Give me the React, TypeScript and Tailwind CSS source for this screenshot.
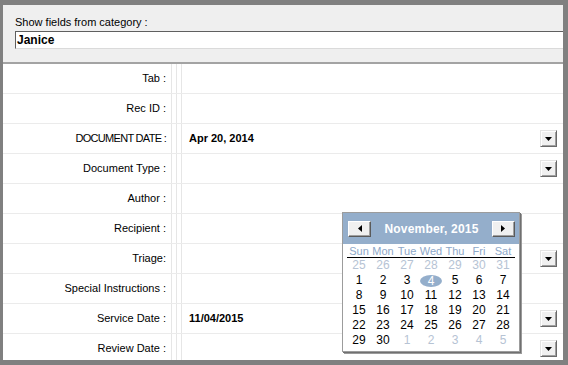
import React from "react";

const FONT = { fontFamily: '"Liberation Sans", Arial, sans-serif' };

const ROWS = [
  { label: "Tab :" },
  { label: "Rec ID :" },
  { label: "DOCUMENT DATE :", value: "Apr 20, 2014", drop: true, tight: true },
  { label: "Document Type :", drop: true },
  { label: "Author :" },
  { label: "Recipient :" },
  { label: "Triage:", drop: true },
  { label: "Special Instructions :" },
  { label: "Service Date :", value: "11/04/2015", drop: true },
  { label: "Review Date :", drop: true },
];

const DAYS = ["Sun", "Mon", "Tue", "Wed", "Thu", "Fri", "Sat"];

// [day, inMonth]
const WEEKS: [number, boolean][][] = [
  [25, 26, 27, 28, 29, 30, 31].map(d => [d, false] as [number, boolean]),
  [1, 2, 3, 4, 5, 6, 7].map(d => [d, true] as [number, boolean]),
  [8, 9, 10, 11, 12, 13, 14].map(d => [d, true] as [number, boolean]),
  [15, 16, 17, 18, 19, 20, 21].map(d => [d, true] as [number, boolean]),
  [22, 23, 24, 25, 26, 27, 28].map(d => [d, true] as [number, boolean]),
  [[29, true], [30, true], [1, false], [2, false], [3, false], [4, false], [5, false]],
];

export default function App() {
  return (
    <div
      className="relative w-[568px] h-[365px] bg-[#808080] pt-[5px] pl-[3px] pr-[5px] pb-[5px] overflow-hidden"
      style={FONT}
    >
      <div className="h-full bg-white flex flex-col overflow-hidden">
        {/* category header */}
        <header className="h-[59px] shrink-0 bg-[#efefef] border-b-2 border-[#a3a3a3] pt-[11px] pl-[12px]">
          <p className="text-[11px] leading-[13px] text-black">Show fields from category :</p>
          <div className="mt-[2px] h-[18px] bg-white border-t border-l border-[#5f5f5f] border-b border-b-[#dadada]
                          flex items-center pl-[1px] text-[12px] font-bold text-black leading-none">
            Janice
          </div>
        </header>

        {/* field rows */}
        <div className="flex-1 min-h-0">
          {ROWS.map(r => <Row key={r.label} {...r} />)}
        </div>
      </div>

      <Calendar />
    </div>
  );
}

function Row({ label, value, drop, tight }: { label: string; value?: string; drop?: boolean; tight?: boolean }) {
  return (
    <div className="h-[30px] flex border-b border-[#ebebeb] text-[11px] text-black">
      <div className="w-[169px] shrink-0 flex items-center justify-end pr-[5px] border-r border-[#e6e6e6]">
        <span className={tight ? "tracking-[-0.7px]" : ""}>{label}</span>
      </div>
      <div className="w-[5px] shrink-0 border-r border-[#e6e6e6]" />
      <div className="w-[5px] shrink-0 border-r border-[#e6e6e6]" />
      <div className="flex-1 flex items-center pl-[7px] pr-[6px]">
        <span className="flex-1 font-bold">{value}</span>
        {drop && <DropButton />}
      </div>
    </div>
  );
}

function DropButton() {
  return (
    <div className="w-[17px] h-[17px] bg-[#f0f0f0] border border-t-[#e3e3e3] border-l-[#e3e3e3] border-r-[#6a6a6a] border-b-[#6a6a6a]
                    shadow-[inset_1px_1px_0_#ffffff,inset_-1px_-1px_0_#a0a0a0] flex items-center justify-center">
      <svg width="7" height="4" viewBox="0 0 7 4">
        <polygon points="0,0 7,0 3.5,4" fill="#000" />
      </svg>
    </div>
  );
}

function NavButton({ dir }: { dir: "left" | "right" }) {
  return (
    <div className="w-[23px] h-[16px] bg-[#f0f0f0] border border-t-white border-l-white border-r-[#5a5a5a] border-b-[#5a5a5a]
                    shadow-[inset_-1px_-1px_0_#a0a0a0] flex items-center justify-center">
      <svg width="4" height="7" viewBox="0 0 4 7">
        {dir === "left"
          ? <polygon points="4,0 4,7 0,3.5" fill="#000" />
          : <polygon points="0,0 0,7 4,3.5" fill="#000" />}
      </svg>
    </div>
  );
}

function Calendar() {
  return (
    <div className="absolute left-[342px] top-[212px] w-[178px] h-[140px] bg-white border border-[#9c9c9c]
                    shadow-[1px_1px_0_#707070,2px_2px_0_#9a9a9a]">
      <div className="h-[31px] bg-[#94aecb] flex items-center justify-between pl-[5px] pr-[4px]">
        <NavButton dir="left" />
        <span className="text-[12px] font-bold text-white tracking-[0.2px]">November, 2015</span>
        <NavButton dir="right" />
      </div>

      <div className="px-[4px]">
        <div className="grid grid-cols-7 h-[13px] mt-[1px] border-b border-black text-[11px] leading-[12px] text-[#8ea8c8]">
          {DAYS.map(d => <span key={d} className="text-center">{d}</span>)}
        </div>

        {WEEKS.map((w, i) => (
          <div key={i} className="grid grid-cols-7 h-[15px] text-[12px] leading-[15px]">
            {w.map(([d, cur], j) => {
              const sel = cur && d === 4;
              return (
                <span key={j} className="flex items-center justify-center">
                  {sel
                    ? <span className="w-[22px] h-[12px] rounded-[50%] bg-[#94aecb] text-white leading-[12px] text-center">{d}</span>
                    : <span className={cur ? "text-black" : "text-[#b6c3d4]"}>{d}</span>}
                </span>
              );
            })}
          </div>
        ))}
      </div>
    </div>
  );
}
